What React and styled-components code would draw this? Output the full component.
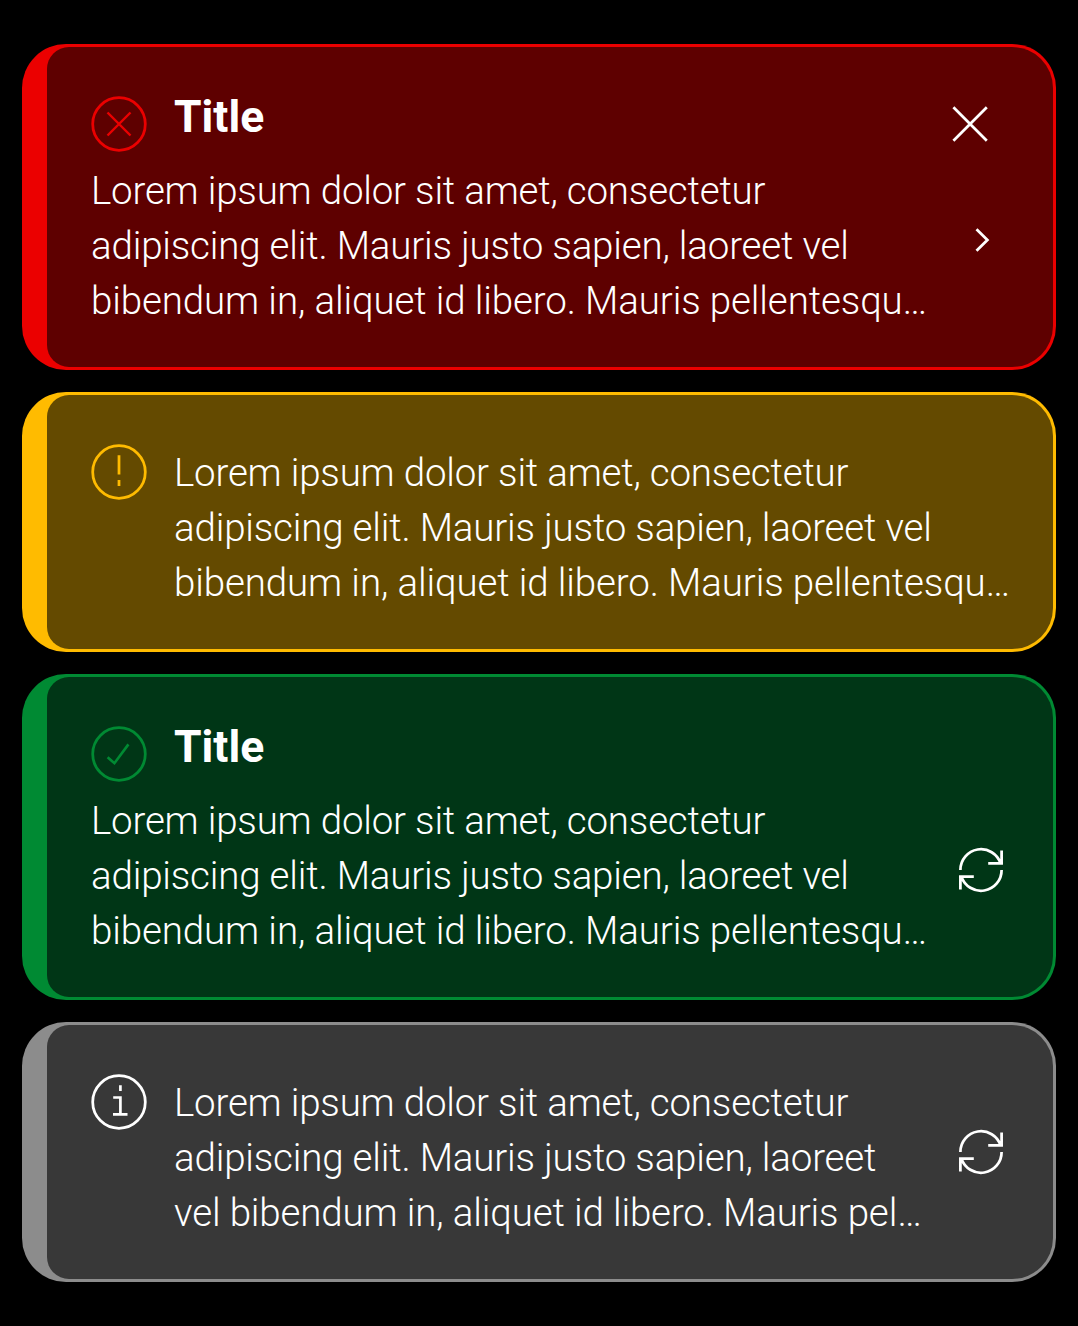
import React from "react";
import styled, { createGlobalStyle } from "styled-components";

const GlobalStyle = createGlobalStyle`
  * { box-sizing: border-box; }
  body { margin: 0; background: #000; }
`;

const Page = styled.main`
  width: 1078px;
  height: 1326px;
  padding: 44px 22px;
  display: flex;
  flex-direction: column;
  gap: 22px;
  background: #000;
  font-family: Roboto, "Liberation Sans", sans-serif;
  color: #fff;
`;

const Card = styled.section`
  height: ${(p) => (p.$titled ? 326 : 260)}px;
  padding: 3px 3px 3px 25px;
  border-radius: 44px;
  background: ${(p) => p.$accent};
  display: flex;
`;

const Panel = styled.div`
  flex: 1;
  min-width: 0;
  display: flex;
  justify-content: space-between;
  padding-left: 44px;
  border-radius: 22px 41px 41px 22px;
  background: ${(p) => p.$fill};
`;

const Main = styled.div`
  flex: 1;
  min-width: 0;
  display: flex;
  flex-direction: ${(p) => (p.$titled ? "column" : "row")};
  gap: ${(p) => (p.$titled ? 0 : 27)}px;
  padding-top: ${(p) => (p.$titled ? 43 : 49)}px;
`;

const Header = styled.div`
  display: flex;
  gap: 27px;
  height: 73px;
`;

const Title = styled.h2`
  margin: 0;
  font-size: 44.5px;
  line-height: 55px;
  font-weight: 700;
`;

const StatusIcon = styled.svg`
  flex: none;
  width: 56px;
  height: 56px;
  margin-top: ${(p) => (p.$titled ? 6 : 0)}px;
  fill: none;
  stroke: ${(p) => p.$color};
  stroke-width: 2.75;
`;

const Body = styled.p`
  margin: 0;
  padding-top: ${(p) => (p.$titled ? 0 : 1)}px;
  font-size: 38.5px;
  line-height: 55px;
  font-weight: 300;
  white-space: nowrap;
`;

const Line = styled.span`
  display: block;
  letter-spacing: ${(p) => p.$tracking}px;
`;

const Actions = styled.div`
  flex: none;
  width: 94px;
  display: flex;
  flex-direction: column;
  justify-content: ${(p) => (p.$centered ? "center" : "flex-start")};
`;

const Slot = styled.div`
  height: ${(p) => p.$height}px;
`;

const ActionIcon = styled.svg`
  display: block;
  flex: none;
  width: 44px;
  height: 44px;
  margin-left: ${(p) => p.$left || 0}px;
  overflow: visible;
  fill: none;
  stroke: #fff;
  stroke-width: 2.75;
`;

const glyphs = {
  error: <path strokeWidth="2.4" d="M16.5 16.5L39.5 39.5M39.5 16.5L16.5 39.5" />,
  warning: <path d="M28 11.3V30.5M28 36V42" />,
  success: <path strokeWidth="2.6" d="M16.6 31.2L23.4 37.2L37.4 18.4" />,
  info: <path strokeWidth="2.7" d="M29.4 11.2V17M22.2 23.5H29.4V40M22 40.3H36.5" />,
};

const Status = ({ kind, color, titled }) => (
  <StatusIcon viewBox="0 0 56 56" $color={color} $titled={titled}>
    <circle cx="28" cy="28" r="26.3" />
    {glyphs[kind]}
  </StatusIcon>
);

const Refresh = () => (
  <ActionIcon viewBox="0 0 44 44">
    <path d="M1.4 22A20.6 20.6 0 0 1 41.57 15.4M42.6 2.4V15.3H29.2M42.6 22A20.6 20.6 0 0 1 2.43 28.6M1.4 41.4V28.6H14.8" />
  </ActionIcon>
);

const Close = () => (
  <ActionIcon viewBox="0 0 44 44" $left={-11}>
    <path d="M5.4 5.2L38.8 38.8M38.8 5.2L5.4 38.8" />
  </ActionIcon>
);

const Chevron = () => (
  <ActionIcon viewBox="0 0 44 44">
    <path d="M17.5 11.2L28.4 22L17.5 32.8" />
  </ActionIcon>
);

const Text = ({ lines, titled }) => (
  <Body $titled={titled}>
    {lines.map(([line, tracking]) => (
      <Line key={line} $tracking={tracking}>
        {line}
      </Line>
    ))}
  </Body>
);

const lorem = [
  ["Lorem ipsum dolor sit amet, consectetur", -0.2],
  ["adipiscing elit. Mauris justo sapien, laoreet vel", -0.185],
  ["bibendum in, aliquet id libero. Mauris pellentesqu…", -0.125],
];

const loremNarrow = [
  ["Lorem ipsum dolor sit amet, consectetur", -0.2],
  ["adipiscing elit. Mauris justo sapien, laoreet", -0.185],
  ["vel bibendum in, aliquet id libero. Mauris pel…", -0.145],
];

const alerts = [
  { kind: "error", accent: "#eb0000", fill: "#5e0000", title: "Title", lines: lorem, close: true, action: <Chevron /> },
  { kind: "warning", accent: "#ffbb00", fill: "#644a00", lines: lorem },
  { kind: "success", accent: "#008a33", fill: "#003616", title: "Title", lines: lorem, action: <Refresh /> },
  { kind: "info", accent: "#8c8c8c", fill: "#383838", icon: "#fff", lines: loremNarrow, action: <Refresh /> },
];

const Alert = ({ kind, accent, fill, icon, title, lines, close, action }) => {
  const titled = Boolean(title);
  const status = <Status kind={kind} color={icon || accent} titled={titled} />;
  return (
    <Card $accent={accent} $titled={titled}>
      <Panel $fill={fill}>
        <Main $titled={titled}>
          {titled ? (
            <Header>
              {status}
              <Title>{title}</Title>
            </Header>
          ) : (
            status
          )}
          <Text lines={lines} titled={titled} />
        </Main>
        {action && (
          <Actions $centered={!titled}>
            {titled && (
              <>
                <Slot $height={55} />
                <Slot $height={116}>{close && <Close />}</Slot>
              </>
            )}
            {action}
          </Actions>
        )}
      </Panel>
    </Card>
  );
};

export default function App() {
  return (
    <>
      <GlobalStyle />
      <Page>
        {alerts.map((a) => (
          <Alert key={a.kind} {...a} />
        ))}
      </Page>
    </>
  );
}
